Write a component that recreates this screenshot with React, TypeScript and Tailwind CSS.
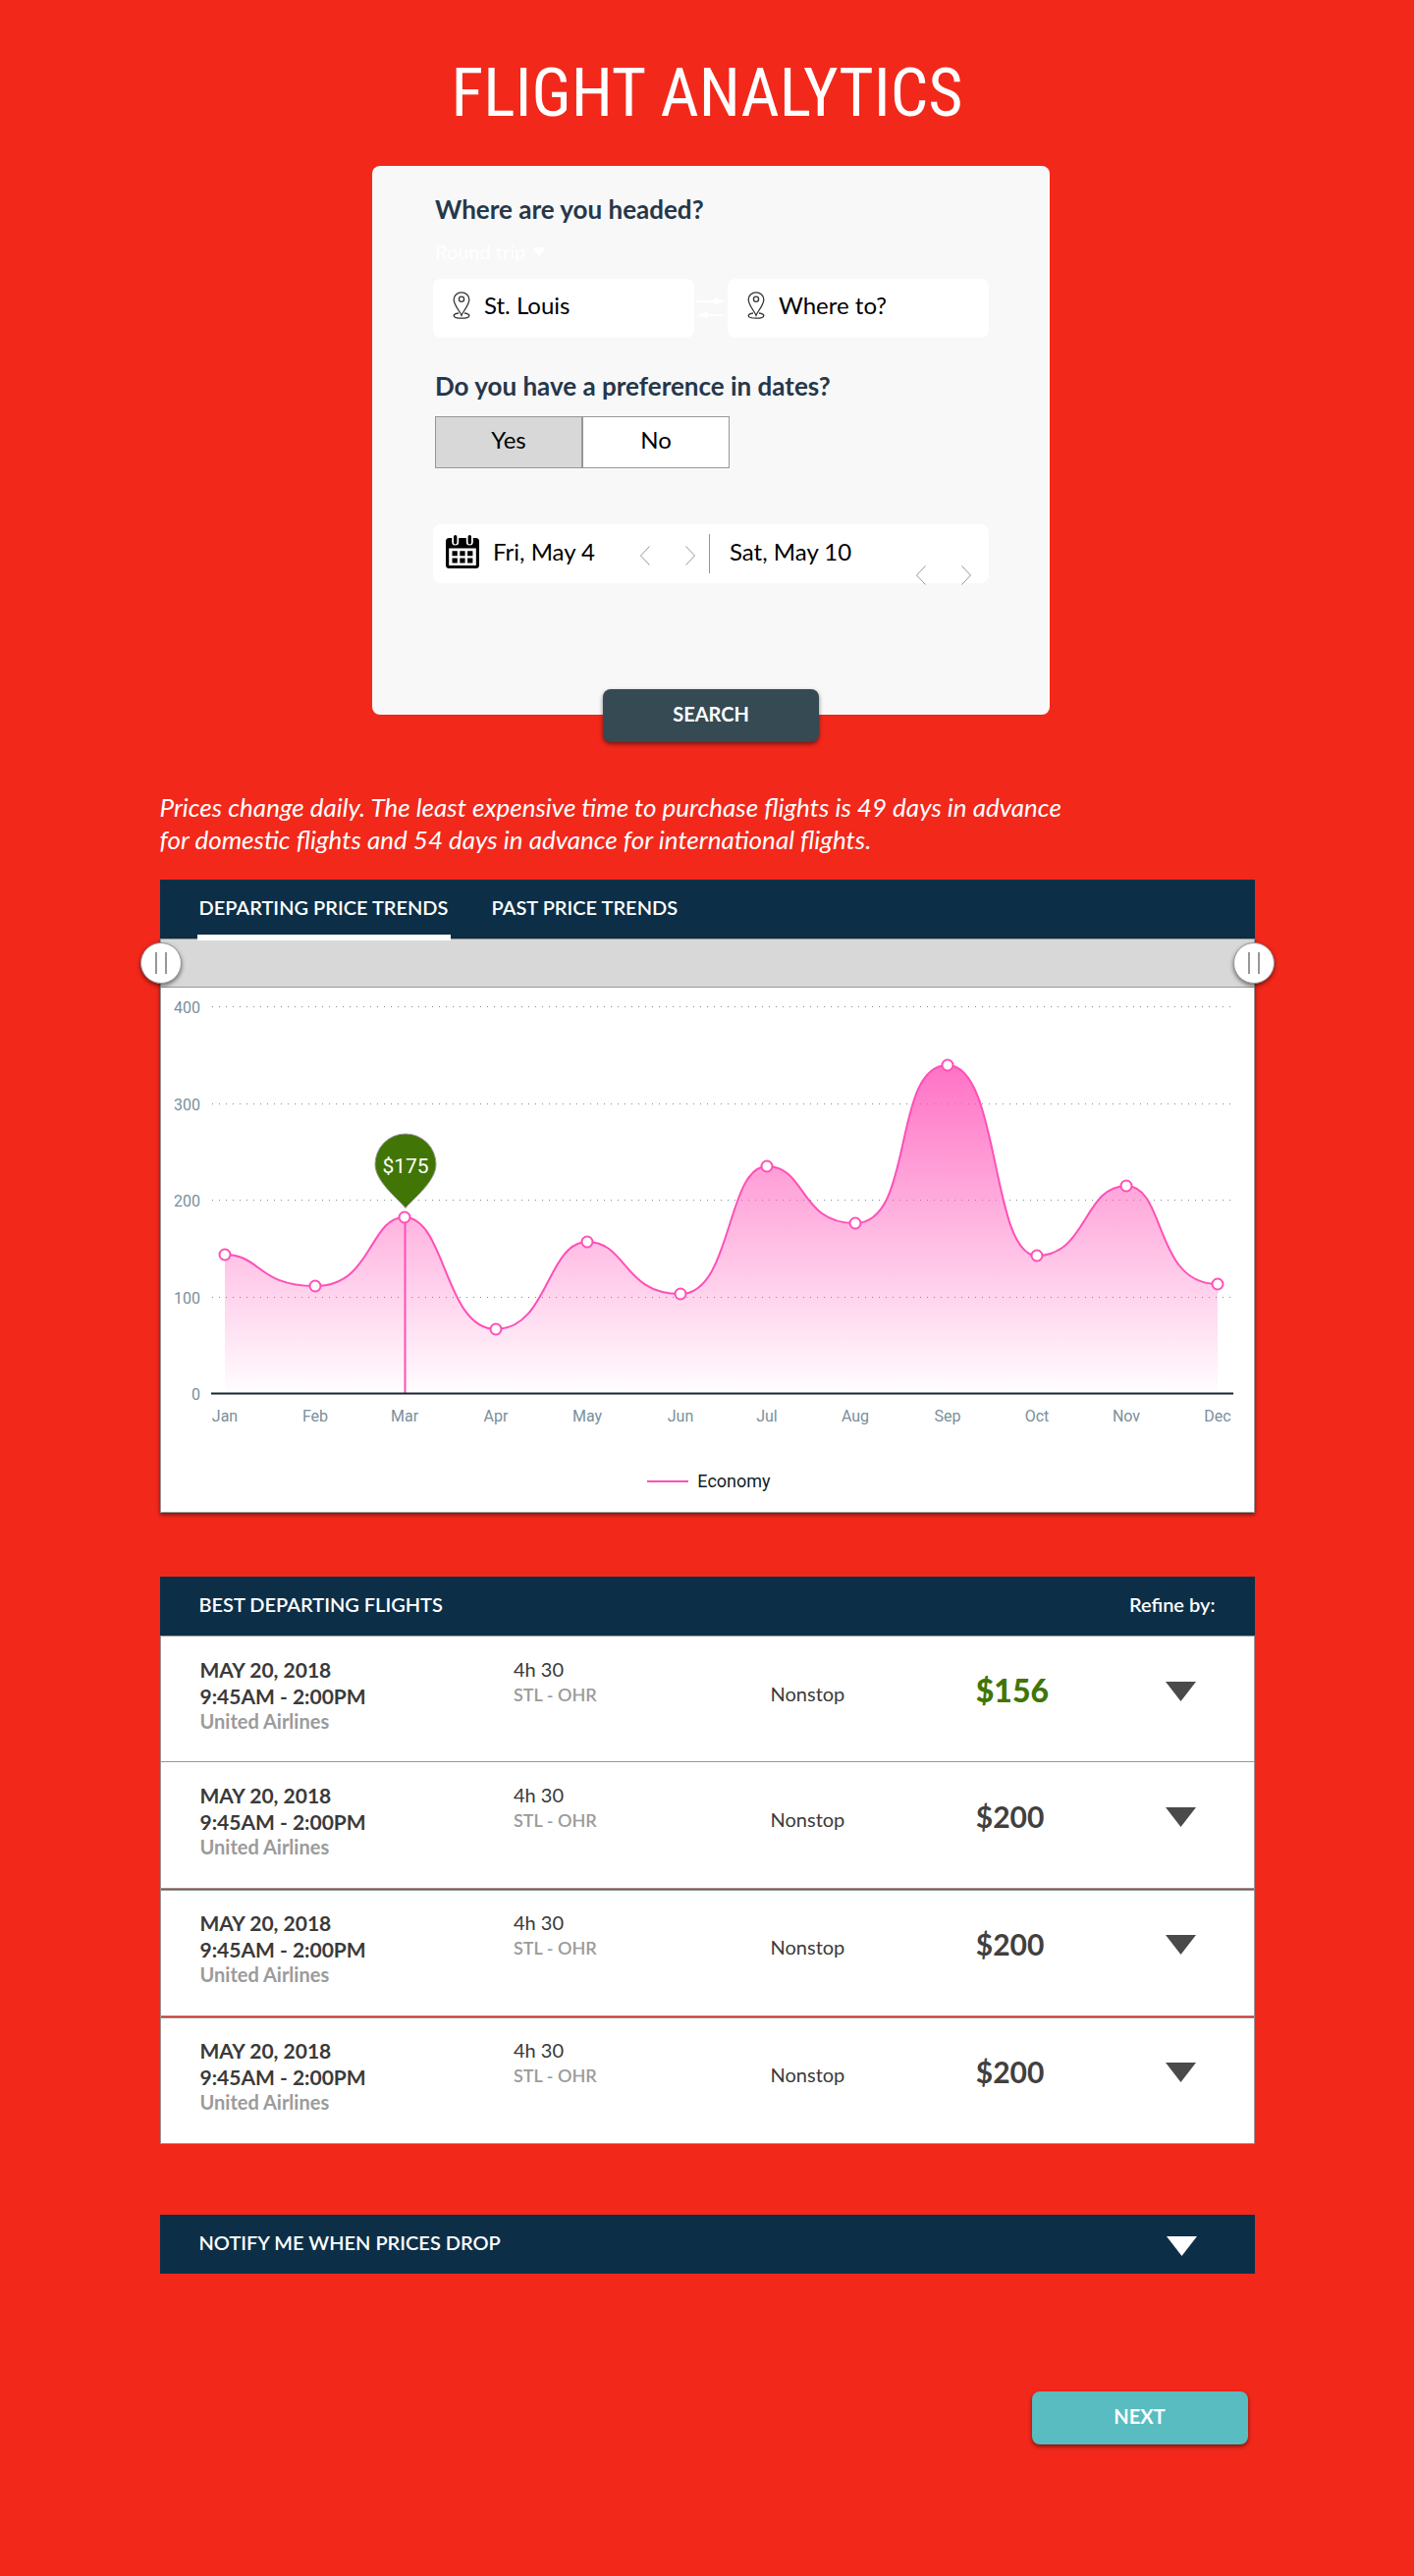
import React, { useState } from "react";

type Point = { month: string; x: number; y: number };

/* Plot-space coordinates of every monthly fare. */
const POINTS: Point[] = [
  { month: "Jan", x: 65, y: 272 },
  { month: "Feb", x: 157, y: 304 },
  { month: "Mar", x: 248, y: 234 },
  { month: "Apr", x: 341, y: 348 },
  { month: "May", x: 434, y: 259 },
  { month: "Jun", x: 529, y: 312 },
  { month: "Jul", x: 617, y: 182 },
  { month: "Aug", x: 707, y: 240 },
  { month: "Sep", x: 801, y: 79 },
  { month: "Oct", x: 892, y: 273 },
  { month: "Nov", x: 983, y: 202 },
  { month: "Dec", x: 1076, y: 302 },
];

/* Horizontal control-point ratios for each segment between two months. */
const EASING: [number, number][] = [
  [0.4, 0.36],
  [0.64, 0.6],
  [0.45, 0.44],
  [0.57, 0.56],
  [0.43, 0.38],
  [0.6, 0.53],
  [0.45, 0.36],
  [0.65, 0.39],
  [0.59, 0.48],
  [0.56, 0.52],
  [0.44, 0.3],
];

const GRID = [
  { label: "400", y: 19 },
  { label: "300", y: 118 },
  { label: "200", y: 216 },
  { label: "100", y: 315 },
];

const CURVE = POINTS.slice(1).reduce((d, p, i) => {
  const from = POINTS[i];
  const [a, b] = EASING[i];
  const dx = p.x - from.x;
  return `${d} C${from.x + dx * a} ${from.y} ${from.x + dx * b} ${p.y} ${p.x} ${p.y}`;
}, `M${POINTS[0].x} ${POINTS[0].y}`);

const FLIGHTS = [
  { id: 1, price: "$156", best: true },
  { id: 2, price: "$200", best: false },
  { id: 3, price: "$200", best: false },
  { id: 4, price: "$200", best: false },
];

function PinIcon() {
  return (
    <svg viewBox="0 0 18 28" className="h-7 w-[18px] shrink-0" fill="none" stroke="#333" strokeWidth="1.3" aria-hidden="true">
      <path d="M9 24.2C7.6 20.6 1.2 13.6 1.2 8.2a7.8 7.4 0 0 1 15.6 0c0 5.4-6.4 12.4-7.8 16Z" />
      <circle cx="9" cy="7.8" r="2.6" />
      <path d="M6 22c-2.9.4-4.8 1.3-4.8 2.5 0 1.6 3.4 2.7 7.8 2.7s7.8-1.1 7.8-2.7c0-1.2-1.9-2.1-4.8-2.5" />
    </svg>
  );
}

function CalendarIcon() {
  return (
    <svg viewBox="0 0 34 34" className="size-[34px] shrink-0" aria-hidden="true">
      <rect x="0" y="3" width="34" height="31" rx="3.5" />
      <path d="M3.2 13.5h27.6V31H3.2z" fill="#fff" />
      <g stroke="#fff" strokeWidth="7" strokeLinecap="round">
        <path d="M9.7 2.500v4.500M24.3 2.500v4.500" />
      </g>
      <g stroke="#000" strokeWidth="3.4" strokeLinecap="round">
        <path d="M9.7 1.700v6M24.3 1.700v6" />
      </g>
      <path d="M6.5 16.2h5.3v5.1H6.5zM14.3 16.2h5.3v5.1h-5.3zM22.1 16.2h5.3v5.1h-5.3zM6.5 23.5h5.3v5.1H6.5zM14.3 23.5h5.3v5.1h-5.3zM22.1 23.5h5.3v5.1h-5.3z" />
    </svg>
  );
}

function SwapIcon() {
  return (
    <svg viewBox="0 0 30 24" className="h-6 w-[30px] shrink-0" fill="#fff" stroke="#fff" aria-hidden="true">
      <path d="M0 5h20M10 19h18" strokeWidth="1.5" />
      <path d="M18 1.5 29 5 18 8.5zM12 15.5 1 19l11 3.5z" stroke="none" />
    </svg>
  );
}

function Chevron({ next = false, label }: { next?: boolean; label: string }) {
  return (
    <button type="button" aria-label={label} className="shrink-0">
      <svg viewBox="0 0 10 20" className="h-5 w-2.5" fill="none" stroke="#979797" strokeWidth="1">
        <path d={next ? "M0.5 0.5 9.5 10 0.5 19.5" : "M9.5 0.5 0.5 10 9.5 19.5"} />
      </svg>
    </button>
  );
}

function Triangle({ className }: { className: string }) {
  return (
    <svg viewBox="0 0 31 20" preserveAspectRatio="none" className={className} fill="currentColor" aria-hidden="true">
      <path d="M0 0h31L15.5 20z" />
    </svg>
  );
}

function PlaceField({ label, value }: { label: string; value?: string }) {
  return (
    <label className="flex h-[60px] min-w-0 flex-1 items-center gap-[14px] rounded-lg bg-white pr-3 pb-1.5 pl-5">
      <PinIcon />
      <input
        type="text"
        aria-label={label}
        placeholder={label}
        defaultValue={value}
        className="w-full min-w-0 bg-transparent text-2xl text-black outline-none placeholder:text-black"
      />
    </label>
  );
}

function SearchCard() {
  const [hasDates, setHasDates] = useState(true);
  return (
    <form className="mx-auto max-w-[698px] pl-2" onSubmit={(e) => e.preventDefault()}>
      <div className="rounded-lg bg-[#f8f8f8] px-4 pt-7 pb-[134px] sm:px-[62px]">
        <h2 className="pl-0.5 text-[26px] leading-8 font-bold text-[#26374a]">Where are you headed?</h2>
        <div className="mt-[13px] mb-[14px] flex items-center gap-1.5 pl-0.5 text-white">
          <select aria-label="Trip type" className="h-7 appearance-none bg-transparent text-xl leading-7">
            <option>Round trip</option>
            <option>One way</option>
          </select>
          <Triangle className="pointer-events-none h-[9px] w-3.5" />
        </div>
        <div className="flex items-center gap-0.5">
          <PlaceField label="From" value="St. Louis" />
          <SwapIcon />
          <PlaceField label="Where to?" />
        </div>

        <h2 className="mt-[33px] pl-0.5 text-[26px] leading-8 font-bold text-[#26374a]">Do you have a preference in dates?</h2>
        <div className="mt-[15px] ml-0.5 flex max-w-[300px] text-2xl">
          <button
            type="button"
            aria-pressed={hasDates}
            onClick={() => setHasDates(true)}
            className="h-[53px] flex-1 border border-[#979797] bg-white pb-1.5 aria-pressed:bg-[#d8d8d8]"
          >
            Yes
          </button>
          <button
            type="button"
            aria-pressed={!hasDates}
            onClick={() => setHasDates(false)}
            className="h-[53px] flex-1 border border-[#979797] bg-white pb-1.5 aria-pressed:bg-[#d8d8d8]"
          >
            No
          </button>
        </div>

        <div className="mt-[57px] flex h-[60px] items-center rounded-lg bg-white text-2xl">
          <div className="flex w-1/2 min-w-0 items-center pr-4 pl-[13px]">
            <div className="flex min-w-0 flex-1 items-center gap-[14px] pb-1">
              <CalendarIcon />
              <input type="text" aria-label="Departure date" defaultValue="Fri, May 4" className="w-full min-w-0 bg-transparent outline-none" />
            </div>
            <div className="flex gap-9 pt-1">
              <Chevron label="Previous departure day" />
              <Chevron next label="Next departure day" />
            </div>
          </div>
          <span className="-ml-0.5 h-10 w-px bg-[#979797]" />
          <div className="flex h-full min-w-0 flex-1 items-center pr-[18px] pl-5">
            <input type="text" aria-label="Return date" defaultValue="Sat, May 10" className="w-full min-w-0 bg-transparent pb-1 outline-none" />
            <div className="-mb-0.5 flex gap-9 self-end">
              <Chevron label="Previous return day" />
              <Chevron next label="Next return day" />
            </div>
          </div>
        </div>
      </div>
      <div className="-mt-[26px] flex justify-center">
        <button
          type="submit"
          className="h-[54px] w-[220px] rounded-lg bg-[#364a54] pb-1 text-xl font-bold text-white shadow-[0_2px_4px_rgba(0,0,0,0.5)]"
        >
          SEARCH
        </button>
      </div>
    </form>
  );
}

const RANGE =
  "pointer-events-none absolute inset-x-[-21px] top-0 h-12 appearance-none bg-transparent [&::-webkit-slider-thumb]:pointer-events-auto [&::-webkit-slider-thumb]:size-[42px] [&::-webkit-slider-thumb]:appearance-none [&::-webkit-slider-thumb]:rounded-full [&::-webkit-slider-thumb]:border [&::-webkit-slider-thumb]:border-[#979797] [&::-webkit-slider-thumb]:shadow-[0_2px_4px_rgba(0,0,0,0.5)] [&::-webkit-slider-thumb]:[background:linear-gradient(#979797,#979797)_14px_9px/2px_22px_no-repeat,linear-gradient(#979797,#979797)_24px_9px/2px_22px_no-repeat,#fff]";

function PriceChart() {
  return (
    <svg viewBox="0 0 1113 464" className="block h-auto w-full font-[Roboto,sans-serif] text-base" role="img" aria-label="Economy fares by month">
      <defs>
        <linearGradient id="fare" gradientUnits="userSpaceOnUse" x1="0" y1="79" x2="0" y2="413">
          <stop offset="0" stopColor="#ff4fb6" stopOpacity="0.8" />
          <stop offset="1" stopColor="#ff4fb6" stopOpacity="0.01" />
        </linearGradient>
      </defs>
      {GRID.map((g) => (
        <g key={g.label}>
          <path d={`M52 ${g.y + 0.5}H1090`} stroke="#7d8c95" strokeDasharray="1 6" />
          <text x="40" y={g.y + 7} textAnchor="end" fill="#78909c">
            {g.label}
          </text>
        </g>
      ))}
      <text x="40" y="420" textAnchor="end" fill="#78909c">
        0
      </text>
      <path d={`${CURVE} V413 H65Z`} fill="url(#fare)" />
      <path d="M248.5 234V413" stroke="#ff4fb6" strokeWidth="2" />
      <path d={CURVE} fill="none" stroke="#ff4fb6" strokeWidth="2" />
      <path d="M51 413.5H1092" stroke="#15262f" strokeWidth="2" />
      {POINTS.map((p) => (
        <g key={p.month}>
          <circle cx={p.x} cy={p.y} r="5.5" fill="#fff" stroke="#ff4fb6" strokeWidth="2" />
          <text x={p.x} y="442" textAnchor="middle" fill="#78909c">
            {p.month}
          </text>
        </g>
      ))}
      <path
        d="M249 224.5C240 214 218 197 218 180a31 31 0 0 1 62 0C280 197 258 214 249 224.5Z"
        fill="#417505"
        stroke="#979797"
      />
      <text x="249" y="189" textAnchor="middle" fill="#fff" className="text-[21px]">
        $175
      </text>
    </svg>
  );
}

function Trends() {
  const [tab, setTab] = useState(0);
  return (
    <section className="mt-6">
      <div role="tablist" className="flex h-[60px] gap-11 bg-[#0c2f47] px-10 text-xl font-semibold text-white">
        {["DEPARTING PRICE TRENDS", "PAST PRICE TRENDS"].map((name, i) => (
          <button key={name} type="button" role="tab" aria-selected={tab === i} onClick={() => setTab(i)} className="relative pb-1">
            {name}
            {tab === i && <span className="absolute -inset-x-0.5 -bottom-0.5 z-10 h-1.5 bg-white" />}
          </button>
        ))}
      </div>
      <div className="border border-[#979797] bg-white shadow-[0_2px_4px_rgba(0,0,0,0.5)]">
        <div className="relative h-[49px] border-b border-[#979797] bg-[#d8d8d8]">
          <input type="range" aria-label="Range start" defaultValue={0} className={RANGE} />
          <input type="range" aria-label="Range end" defaultValue={100} className={RANGE} />
        </div>
        <PriceChart />
        <div className="flex items-center justify-center gap-[9px] pt-[27px] pb-[19px] pl-1 font-[Roboto,sans-serif] text-lg leading-6 text-[#101c26]">
          <span className="h-0.5 w-[42px] bg-[#ff4fb6]" />
          Economy
        </div>
      </div>
    </section>
  );
}

const CELL = [
  "border-y border-[#979797] p-0 align-top",
  "border-b border-[#979797] p-0 align-top",
  "border-y border-t-[#f2281b] border-b-[#979797] p-0 align-top shadow-[inset_0_1px_0_#979797]",
];

function Flights() {
  return (
    <section className="mt-[65px]">
      <div className="flex h-[60px] items-center justify-between bg-[#0c2f47] px-10 pb-1 text-xl font-semibold text-white">
        <h2>BEST DEPARTING FLIGHTS</h2>
        <button type="button">Refine by:</button>
      </div>
      <table
        className="w-full table-fixed border-separate border-spacing-0 border-x border-[#979797] bg-white text-xl text-[#3a3a3a]"
        aria-label="Best departing flights"
      >
        <colgroup>
          <col className="w-[32.3%]" />
          <col className="w-[23.5%]" />
          <col className="w-[18.8%]" />
          <col className="w-[17.4%]" />
          <col />
        </colgroup>
        <tbody>
          {FLIGHTS.map((f, i) => {
            const cell = CELL[Math.min(i, 2)];
            return (
              <tr key={f.id} className={i < 2 ? "h-[129px]" : "h-[130px]"}>
                <td className={cell}>
                  <div className="pt-5 pl-10 text-[21px] leading-[27px] font-bold">
                    <p>MAY 20, 2018</p>
                    <p>9:45AM - 2:00PM</p>
                    <p className="text-xl leading-[25px] text-[#9b9b9b]">United Airlines</p>
                  </div>
                </td>
                <td className={cell}>
                  <p className="pt-5 leading-[27px]">4h 30</p>
                  <p className="text-lg leading-[25px] font-semibold text-[#9b9b9b]">STL - OHR</p>
                </td>
                <td className={cell}>
                  <p className="pt-[45px] leading-[27px]">Nonstop</p>
                </td>
                <td className={cell}>
                  <p
                    className={
                      f.best
                        ? "pt-[37px] text-[32px] leading-9 font-black text-[#417505]"
                        : "pt-[37px] text-[30px] leading-9 font-bold text-[#404040]"
                    }
                  >
                    {f.price}
                  </p>
                </td>
                <td className={cell}>
                  <button type="button" aria-label="Show flight details" className="mt-[46px] block text-[#4a4a4a]">
                    <Triangle className="h-5 w-[31px]" />
                  </button>
                </td>
              </tr>
            );
          })}
        </tbody>
      </table>
    </section>
  );
}

export default function App() {
  return (
    <main className="min-h-screen bg-[#f2281b] px-8 pt-10 pb-[134px] font-[Lato,sans-serif] text-black">
      <div className="mx-auto max-w-[1115px]">
        <h1 className="mb-[19px] text-center font-['Roboto_Condensed',Roboto,sans-serif] text-[68px] leading-[110px] text-white">
          FLIGHT ANALYTICS
        </h1>
        <SearchCard />
        <p className="mt-[50px] max-w-[940px] text-[26px] leading-[33px] text-white italic">
          Prices change daily. The least expensive time to purchase flights is 49 days in advance for domestic flights and 54 days in advance for
          international flights.
        </p>
        <Trends />
        <Flights />
        <button
          type="button"
          aria-expanded="false"
          className="mt-[72px] flex h-[60px] w-full items-center justify-between bg-[#0c2f47] pr-[59px] pl-10 text-xl font-semibold text-white"
        >
          <span className="pb-1">NOTIFY ME WHEN PRICES DROP</span>
          <Triangle className="mt-1 h-5 w-[31px]" />
        </button>
        <div className="mt-[120px] flex justify-end pr-[7px]">
          <button
            type="button"
            className="h-[54px] w-[220px] rounded-lg bg-[#58bcc0] pb-1 text-xl font-bold text-white shadow-[0_2px_4px_rgba(0,0,0,0.5)]"
          >
            NEXT
          </button>
        </div>
      </div>
    </main>
  );
}
